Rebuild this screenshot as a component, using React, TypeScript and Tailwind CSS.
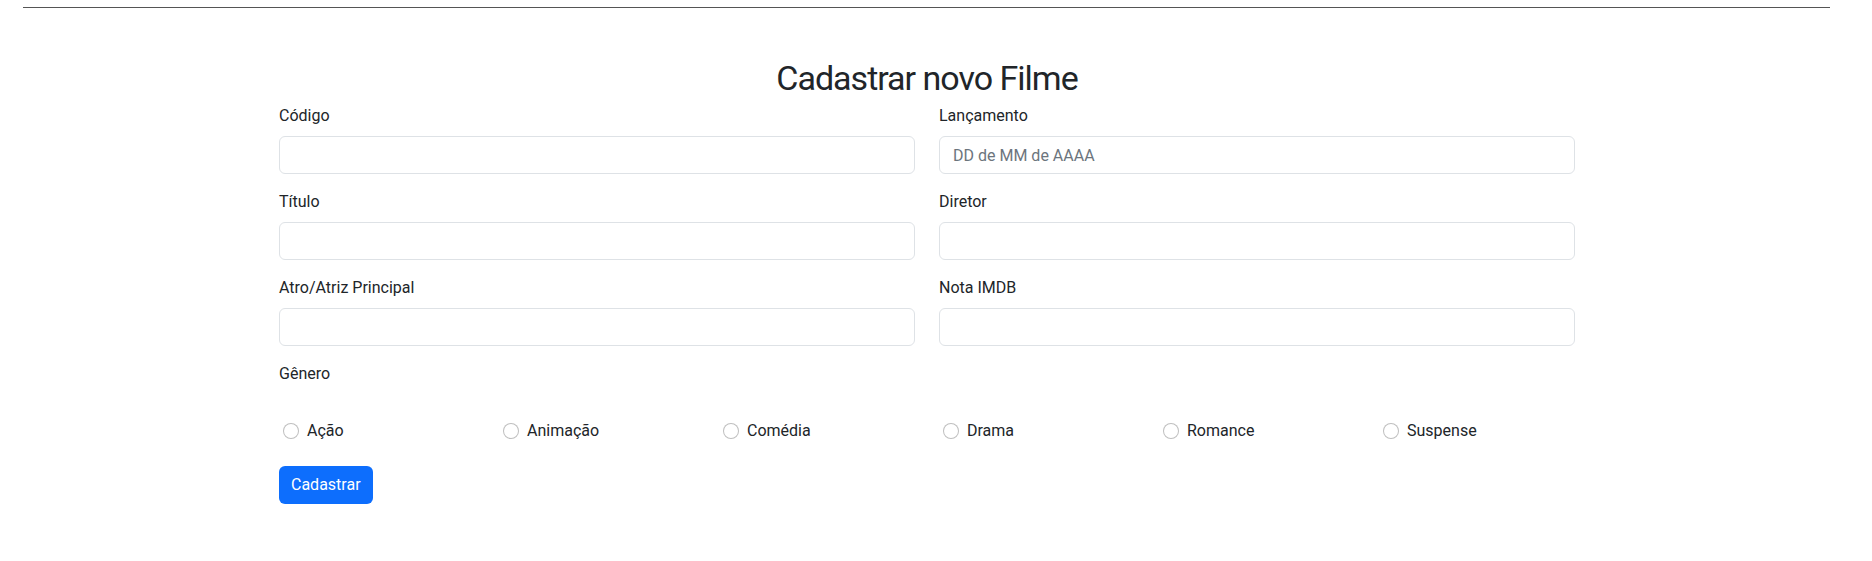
import React from "react"

const font = { fontFamily: '"Segoe UI", Roboto, "Liberation Sans", sans-serif' }

const campos = [
  [{ label: "Código" }, { label: "Lançamento", placeholder: "DD de MM de AAAA" }],
  [{ label: "Título" }, { label: "Diretor" }],
  [{ label: "Atro/Atriz Principal" }, { label: "Nota IMDB" }],
]

const generos = ["Ação", "Animação", "Comédia", "Drama", "Romance", "Suspense"]

function Campo({ label, placeholder }: { label: string; placeholder?: string }) {
  return (
    <div className="flex flex-col">
      <label className="mb-2 text-base leading-6">{label}</label>
      <input
        type="text"
        placeholder={placeholder}
        className="h-[38px] w-full rounded-[6px] border border-[#dee2e6] bg-white px-[13px] text-base text-[#212529] outline-none placeholder:text-[#6c757d]"
      />
    </div>
  )
}

export default function App() {
  return (
    <div className="min-h-[561px] w-[1854px] bg-white text-[#212529]" style={font}>
      <div className="pl-[23px] pr-[24px] pt-[7px]">
        <hr className="border-0 border-t border-[#555555]" />
      </div>

      <form className="mx-auto w-[1296px]" onSubmit={(e) => e.preventDefault()}>
        <h2 className="mt-[50px] mb-[6px] text-center text-[34px] font-normal leading-[40px] tracking-[-1px]">
          Cadastrar novo Filme
        </h2>

        {campos.map((linha, i) => (
          <div key={i} className="mb-4 grid grid-cols-2 gap-6">
            {linha.map((c) => (
              <Campo key={c.label} label={c.label} placeholder={c.placeholder} />
            ))}
          </div>
        ))}

        <div className="text-base leading-6">Gênero</div>

        <div className="mt-[33px] grid grid-cols-6 gap-6">
          {generos.map((g) => (
            <label key={g} className="flex items-center gap-2 pl-1 text-base leading-6">
              <input
                type="radio"
                name="genero"
                value={g}
                className="h-4 w-4 appearance-none rounded-full border border-black/25 bg-white"
              />
              {g}
            </label>
          ))}
        </div>

        <button
          type="submit"
          className="mt-[23px] h-[38px] rounded-[6px] bg-[#0d6efd] px-3 text-base leading-6 text-white"
        >
          Cadastrar
        </button>
      </form>
    </div>
  )
}
